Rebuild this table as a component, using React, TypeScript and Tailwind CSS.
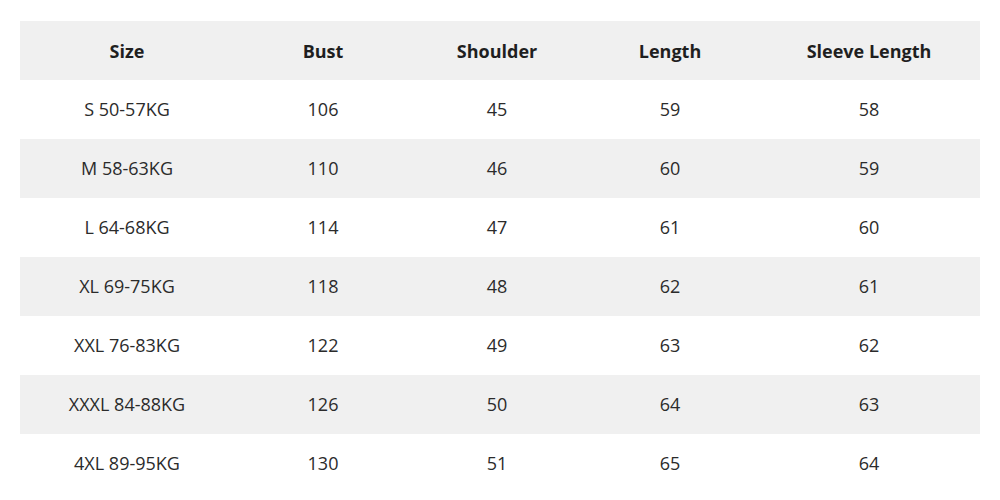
const columns = [
  { label: "Size", width: "w-[214px]" },
  { label: "Bust", width: "w-[178px]" },
  { label: "Shoulder", width: "w-[170px]" },
  { label: "Length", width: "w-[176px]" },
  { label: "Sleeve Length", width: "w-[222px]" },
];

const rows: string[][] = [
  ["S 50-57KG", "106", "45", "59", "58"],
  ["M 58-63KG", "110", "46", "60", "59"],
  ["L 64-68KG", "114", "47", "61", "60"],
  ["XL 69-75KG", "118", "48", "62", "61"],
  ["XXL 76-83KG", "122", "49", "63", "62"],
  ["XXXL 84-88KG", "126", "50", "64", "63"],
  ["4XL 89-95KG", "130", "51", "65", "64"],
];

export default function App() {
  return (
    <div className="h-[500px] w-[1000px] bg-white px-5 pt-[21px] font-['Open_Sans',sans-serif] text-[18px] text-[#2b2b2b]">
      <div className="flex h-[59px] items-center bg-[#f0f0f0] pt-[2px] font-bold text-[#1f1f1f]">
        {columns.map((c) => (
          <div key={c.label} className={`${c.width} text-center`}>
            {c.label}
          </div>
        ))}
      </div>
      {rows.map((r, i) => (
        <div
          key={r[0]}
          className={`flex h-[59px] items-center ${i % 2 === 1 ? "bg-[#f0f0f0]" : "bg-white"}`}
        >
          {r.map((v, j) => (
            <div key={j} className={`${columns[j].width} text-center`}>
              {v}
            </div>
          ))}
        </div>
      ))}
    </div>
  );
}
